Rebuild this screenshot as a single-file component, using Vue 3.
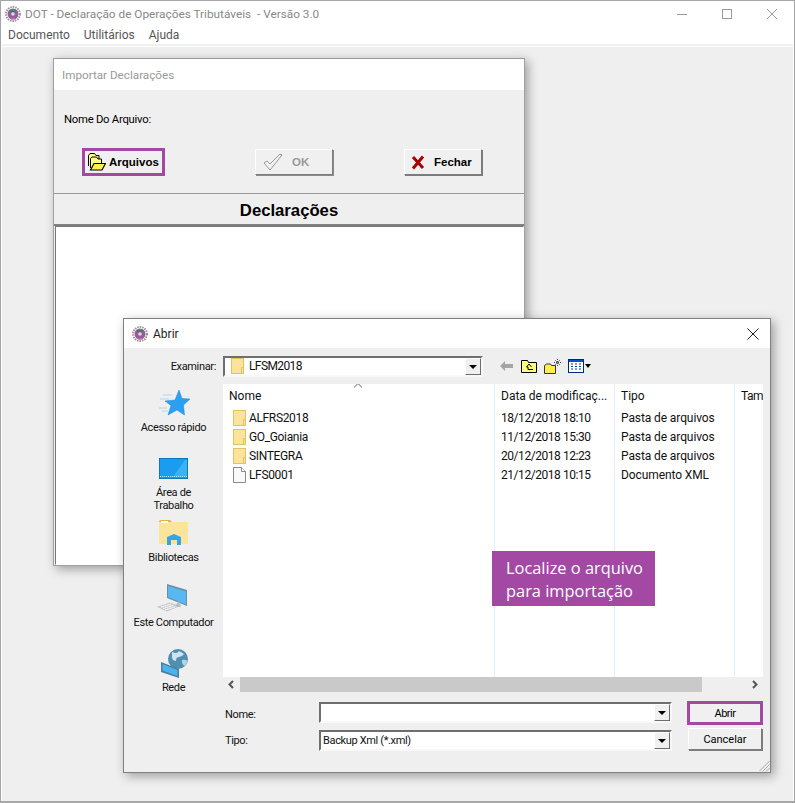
<template>
  <div class="app">
    <div class="titlebar">
      <svg class="logo" viewBox="0 0 16 16"><use href="#logo-mark" /></svg>
      <span class="app-title">DOT - Declaração de Operações Tributáveis&nbsp; - Versão 3.0</span>
      <div class="caption">
        <svg width="45" height="16" viewBox="0 0 45 16"><path d="M18 8.500h10" stroke="#999" fill="none" /></svg>
        <svg width="45" height="16" viewBox="0 0 45 16"><rect x="18.500" y="3.500" width="9" height="9" stroke="#999" fill="none" /></svg>
        <svg width="45" height="16" viewBox="0 0 45 16"><path d="M18 3l10 10M28 3L18 13" stroke="#999" fill="none" /></svg>
      </div>
    </div>
    <div class="menubar">
      <span v-for="m in menus" :key="m">{{ m }}</span>
    </div>

    <div class="mdi">
      <!-- janela de importacao -->
      <section class="win win-import">
        <header class="imp-title">Importar Declarações</header>
        <div class="imp-body">
          <div class="imp-label">Nome Do Arquivo:</div>
          <div class="imp-buttons">
            <button class="bevel btn-arq">
              <svg width="18" height="18" viewBox="0 0 18 18">
                <path d="M.5 13V2.500L2 .5h4.500l1.500 2h3v4" fill="#ffff80" stroke="#000" />
                <path d="M2.500 15V5.500L4 4h4.500L10 6h3.500v4" fill="#ffff80" stroke="#000" />
                <path d="M2.500 17L6 10.500h11.500L14 17z" fill="#fff04a" stroke="#000" stroke-width="1.200" />
              </svg>
              Arquivos
            </button>
            <button class="bevel btn-ok" disabled>
              <svg width="20" height="18" viewBox="0 0 20 18"><path d="M1 10l3-2 3 3L17 1l2 1L7 17z" fill="#f2f2f2" stroke="#999" /></svg>
              <span>OK</span>
            </button>
            <button class="bevel btn-close">
              <svg width="14" height="15" viewBox="0 0 14 15"><path d="M2 2l10 11M12 1.500L2 13.500" stroke="#a80000" stroke-width="3" fill="none" /></svg>
              <span>Fechar</span>
            </button>
          </div>
        </div>
        <div class="imp-heading">Declarações</div>
        <div class="imp-list"></div>
      </section>

      <!-- dialogo abrir -->
      <section class="win win-open">
        <header class="open-title">
          <svg class="logo" viewBox="0 0 16 16"><use href="#logo-mark" /></svg>
          <span>Abrir</span>
          <svg class="open-x" width="12" height="12" viewBox="0 0 12 12"><path d="M.5.500l11 11M11.500.500l-11 11" stroke="#222" fill="none" /></svg>
        </header>
        <div class="open-body">
          <div class="open-tools">
            <label class="tools-label">Examinar:</label>
            <div class="field look-in">
              <svg class="folder" width="13" height="16" viewBox="0 0 13 16"><use href="#folder" /></svg>
              <span>LFSM2018</span>
              <i class="drop"></i>
            </div>
            <div class="tool-icons">
              <svg width="14" height="10" viewBox="0 0 14 10"><path d="M0 5l5-5v3h8v4H5v3z" fill="#a5a5a5" /></svg>
              <svg width="16" height="14" viewBox="0 0 16 14">
                <path d="M.5 13.500V1.500h6l1 2h8v10z" fill="#ffff80" stroke="#000" />
                <path d="M8 5L5.500 8H7v2.500h5M8 5l2.500 3" fill="none" stroke="#000" />
              </svg>
              <svg width="17" height="15" viewBox="0 0 17 15">
                <path d="M.5 14.500V6.500l2-1.500h4l1 1.500h4v8z" fill="#ffec4d" stroke="#333" />
                <path d="M13.500 0v7M10 3.500h7M11 1l5 5M16 1l-5 5" stroke="#444" stroke-dasharray="1 1" fill="none" />
              </svg>
              <span class="view-ico">
                <svg width="16" height="14" viewBox="0 0 16 14">
                  <rect x=".5" y=".5" width="15" height="13" fill="#fff" stroke="#002a70" />
                  <rect x="1" y="1" width="14" height="2" fill="#0a50c8" />
                  <path d="M3 5h2M7 5h2M11 5h2M3 7.500h2M7 7.500h2M11 7.500h2M3 10h2M7 10h2M11 10h2" stroke="#1a3aa0" fill="none" />
                </svg>
                <i></i>
              </span>
            </div>
          </div>

          <div class="open-main">
            <nav class="places">
              <div v-for="p in places" :key="p.label" class="place">
                <div class="place-ico">
                  <svg v-if="p.icon === 'star'" width="32" height="26" viewBox="0 0 32 26">
                    <path d="M5 5h9M2 9h9M1 18h8M4 21h6" stroke="#a8d8f8" fill="none" />
                    <path d="M21 0l3 8.500 8 .5-6.500 6 1 10-7.500-5-9 5 3-9.500-6-4.500 10-1z" fill="#2b9ff0" stroke="#1a86d8" stroke-width=".5" />
                  </svg>
                  <svg v-else-if="p.icon === 'desktop'" width="29" height="21" viewBox="0 0 29 21">
                    <rect x=".5" y=".5" width="28" height="20" fill="#1a9cf0" stroke="#0d76bc" />
                    <path d="M14 19L26 2h2v17z" fill="#3cb2f6" />
                    <path d="M1 18.500h27" stroke="#bfe6ff" stroke-dasharray="1 1" />
                  </svg>
                  <svg v-else-if="p.icon === 'lib'" width="29" height="26" viewBox="0 0 29 26">
                    <path d="M0 2q0-2 2-2h9l2 2h-13z" fill="#e8b33c" />
                    <rect x="0" y="2" width="29" height="22" rx="1" fill="#fce49a" />
                    <rect x="2" y="1" width="7" height="2" fill="#fff" />
                    <path d="M8 25v-8l7-3 7 3v8h-4v-5h-6v5z" fill="#33a6ea" />
                  </svg>
                  <svg v-else-if="p.icon === 'pc'" width="32" height="28" viewBox="0 0 32 28">
                    <path d="M9 0l20 6v16L9 14z" fill="#6d8ea3" />
                    <path d="M10 2l18 5.500v13L10 13z" fill="#58b8f2" />
                    <path d="M21 17l2 6h-7z" fill="#b5c0c8" />
                    <path d="M0 23l12-4 9 3-12 5z" fill="#d0d4d8" stroke="#a8adb2" stroke-width=".5" />
                    <path d="M3 23l10-3M5 24.500l10-3M7 26l10-3" stroke="#fff" stroke-dasharray="1.500 .7" />
                  </svg>
                  <svg v-else width="28" height="29" viewBox="0 0 28 29">
                    <circle cx="18" cy="10" r="10" fill="#4f8fb2" />
                    <path d="M12 3q5 2 6 0t6 2q-2 3-5 3t-3 4q-3 0-4-3z" fill="#cfe3ef" />
                    <path d="M22 11q3-1 5.500 1-1 4-3 5-3-2-2.500-6z" fill="#b7d3e2" />
                    <path d="M1 13l18 7v9L1 23z" fill="#4d7d98" />
                    <path d="M2.500 15l15 6v6L2.500 21.500z" fill="#4ab3ef" />
                  </svg>
                </div>
                <div class="place-label" :class="{ wrap: p.icon === 'desktop' }">{{ p.label }}</div>
              </div>
            </nav>

            <div class="browser">
              <div class="grid">
                <i class="sort-arrow"></i>
                <div class="cols">
                  <div v-for="c in columns" :key="c.label" class="col" :style="{ width: c.width + 'px' }">
                    <div class="col-head">{{ c.label }}</div>
                  </div>
                </div>
                <div class="rows">
                  <div v-for="f in files" :key="f.name" class="row">
                    <div class="cell cell-name">
                      <svg v-if="f.dir" width="13" height="16" viewBox="0 0 13 16"><use href="#folder" /></svg>
                      <svg v-else width="13" height="16" viewBox="0 0 13 16">
                        <path d="M.5.500h8l4 4v11H.5z" fill="#f9f9f9" stroke="#8a8a8a" />
                        <path d="M8.500.500v4h4" fill="#fff" stroke="#8a8a8a" />
                      </svg>
                      <span>{{ f.name }}</span>
                    </div>
                    <div class="cell cell-w cell-date">{{ f.date }}</div>
                    <div class="cell cell-w">{{ f.type }}</div>
                  </div>
                </div>
                <div class="hint">Localize o arquivo<br />para importação</div>
              </div>
              <div class="hscroll">
                <svg width="17" height="15" viewBox="0 0 17 15"><path d="M10 4L6.500 7.500 10 11" stroke="#555" stroke-width="2" fill="none" /></svg>
                <div class="track"><div class="thumb"></div></div>
                <svg width="17" height="15" viewBox="0 0 17 15"><path d="M7 4l3.500 3.500L7 11" stroke="#555" stroke-width="2" fill="none" /></svg>
              </div>
            </div>
          </div>

          <div class="open-foot">
            <div class="foot-labels">
              <label>Nome:</label>
              <label>Tipo:</label>
            </div>
            <div class="foot-fields">
              <div class="field"><i class="drop"></i></div>
              <div class="field"><span class="type-val">Backup Xml (*.xml)</span><i class="drop"></i></div>
            </div>
            <div class="foot-buttons">
              <button class="bevel btn-open">Abrir</button>
              <button class="bevel btn-cancel">Cancelar</button>
            </div>
          </div>
          <svg class="grip" width="12" height="12" viewBox="0 0 12 12"><path d="M11.500 1l-10 10M11.500 4.500l-7 7M11.500 8l-3.500 3.500" stroke="#a8a8a8" fill="none" /></svg>
        </div>
      </section>
    </div>

    <svg width="0" height="0" class="defs">
      <defs>
        <symbol id="folder" viewBox="0 0 13 16">
          <rect x=".5" y=".5" width="12" height="15" fill="#fbe39b" stroke="#e3c267" />
          <path d="M10.500 15V9.500h2" fill="none" stroke="#e3c267" />
        </symbol>
        <symbol id="logo-mark" viewBox="0 0 16 16">
          <circle cx="8" cy="8" r="7" fill="none" stroke="#9b8f9e" stroke-width="2" stroke-dasharray="1.500 1" />
          <circle cx="8" cy="8" r="5.500" fill="#77727c" />
          <path d="M3 6h10v3l-2 3H5L3 9z" fill="#9a5aa0" />
          <path d="M5 4h6v2H5z" fill="#4a7a68" />
          <circle cx="8" cy="8" r="1.800" fill="#dcd8e2" />
          <path d="M6 12h4v1.500H6z" fill="#c86a9a" />
        </symbol>
      </defs>
    </svg>
  </div>
</template>

<script setup>
const menus = ['Documento', 'Utilitários', 'Ajuda'];

const places = [
  { icon: 'star', label: 'Acesso rápido' },
  { icon: 'desktop', label: 'Área de Trabalho' },
  { icon: 'lib', label: 'Bibliotecas' },
  { icon: 'pc', label: 'Este Computador' },
  { icon: 'net', label: 'Rede' },
];

const columns = [
  { label: 'Nome', width: 272 },
  { label: 'Data de modificaç...', width: 120 },
  { label: 'Tipo', width: 120 },
  { label: 'Tam', width: 28 },
];

const files = [
  { name: 'ALFRS2018', date: '18/12/2018 18:10', type: 'Pasta de arquivos', dir: true },
  { name: 'GO_Goiania', date: '11/12/2018 15:30', type: 'Pasta de arquivos', dir: true },
  { name: 'SINTEGRA', date: '20/12/2018 12:23', type: 'Pasta de arquivos', dir: true },
  { name: 'LFS0001', date: '21/12/2018 10:15', type: 'Documento XML', dir: false },
];
</script>

<style>
html,
body {
  margin: 0;
  background: #fff;
}
</style>

<style scoped>
.app {
  width: 795px;
  height: 803px;
  box-sizing: border-box;
  border: 1px solid #a6a6a6;
  border-bottom-width: 2px;
  background: #fff;
  display: flex;
  flex-direction: column;
  overflow: hidden;
  font-family: Roboto, 'Open Sans', sans-serif;
  color: #111;
}
.defs {
  position: absolute;
}
.logo {
  width: 16px;
  height: 16px;
  flex: none;
}
.titlebar {
  height: 25px;
  display: flex;
  align-items: center;
  padding-left: 4px;
  flex: none;
}
.app-title {
  margin-left: 4px;
  font-size: 11.800px;
  color: #888;
  white-space: nowrap;
}
.caption {
  margin-left: auto;
  display: flex;
}
.menubar {
  height: 18px;
  display: flex;
  gap: 14px;
  padding-left: 7px;
  align-items: center;
  font-size: 12px;
  color: #555;
  flex: none;
}
.mdi {
  flex: 1;
  position: relative;
  border-top: 2px solid #f0f0f0;
  margin: 0 1px 0 1px;
  background: #efefef;
  box-shadow: 0 1px 0 #fff inset;
}
.win {
  position: absolute;
  box-sizing: border-box;
  display: flex;
  flex-direction: column;
  background: #efefef;
  box-shadow: 3px 3px 10px rgba(0, 0, 0, 0.35);
}
.win-import {
  left: 51px;
  top: 12px;
  width: 472px;
  height: 508px;
  border: 1px solid #a0a0a0;
  border-top-color: #999;
}
.win-open {
  left: 121px;
  top: 272px;
  width: 648px;
  height: 455px;
  border: 1px solid #7f7f7f;
}

/* botoes estilo antigo */
.bevel {
  box-sizing: border-box;
  padding: 0;
  background: #f0f0f0;
  border: 1px solid;
  border-color: #fff #7c7c7c #7c7c7c #fff;
  box-shadow: 1px 1px 0 #7c7c7c;
  font-family: 'Liberation Sans', sans-serif;
  color: #000;
  display: flex;
  align-items: center;
}

.imp-title {
  height: 31px;
  background: #fff;
  display: flex;
  align-items: center;
  padding-left: 8px;
  font-size: 11.700px;
  color: #999;
  flex: none;
}
.imp-body {
  height: 103px;
  box-sizing: border-box;
  padding: 22px 0 0 10px;
  flex: none;
}
.imp-label {
  font-size: 11.300px;
  line-height: 16px;
  letter-spacing: -0.25px;
  color: #000;
}
.imp-buttons {
  display: flex;
  margin: 20px 0 0 18px;
  align-items: flex-start;
}
.btn-arq {
  width: 83px;
  height: 28px;
  border: 3px solid #a349a4;
  box-shadow: none;
  gap: 3px;
  padding-left: 3px;
  font-size: 11.500px;
  font-weight: 700;
}
.btn-ok,
.btn-close {
  width: 78px;
  height: 26px;
  margin-top: 1px;
  font-size: 11.500px;
  font-weight: 700;
}
.btn-ok {
  margin-left: 90px;
  padding-left: 7px;
  color: #9a9a9a;
  box-shadow: 1px 1px 0 #8c8c8c;
}
.btn-ok span {
  margin-left: 9px;
}
.btn-close {
  margin-left: 71px;
  padding-left: 6px;
}
.btn-close span {
  margin-left: 9px;
}
.imp-heading {
  height: 33px;
  box-sizing: border-box;
  padding-top: 4px;
  border-top: 1px solid #999;
  border-bottom: 2px solid #808080;
  display: flex;
  align-items: center;
  justify-content: center;
  font-family: 'Liberation Sans', sans-serif;
  font-weight: 700;
  font-size: 16.700px;
  color: #000;
  flex: none;
}
.imp-list {
  flex: 1;
  background: #fff;
  margin: 0 0 0 1px;
  border: 1px solid #777;
  border-right-color: #fff;
  border-bottom-color: #fff;
}

.open-title {
  height: 29px;
  background: #fff;
  display: flex;
  align-items: center;
  padding-left: 8px;
  gap: 5px;
  font-size: 12px;
  color: #222;
  flex: none;
}
.open-x {
  margin-left: auto;
  margin-right: 11px;
}
.open-body {
  flex: 1;
  position: relative;
  display: flex;
  flex-direction: column;
  font-size: 11px;
  letter-spacing: -0.35px;
  color: #111;
}
.open-tools {
  height: 36px;
  display: flex;
  align-items: center;
  flex: none;
}
.tools-label {
  width: 92px;
  text-align: right;
  font-size: 11px;
}
.field {
  position: relative;
  box-sizing: border-box;
  height: 21px;
  background: #fff;
  border: 2px solid;
  border-color: #6e6e6e #f8f8f8 #f8f8f8 #6e6e6e;
  display: flex;
  align-items: center;
}
.look-in {
  width: 260px;
  margin-left: 7px;
  padding-left: 6px;
  gap: 5px;
  font-size: 12px;
  letter-spacing: -0.6px;
}
.drop {
  position: absolute;
  right: 0;
  top: 0;
  width: 16px;
  height: 17px;
  box-sizing: border-box;
  background: #f0f0f0;
  border: 1px solid;
  border-color: #fff #6e6e6e #6e6e6e #fff;
}
.drop::after {
  content: '';
  position: absolute;
  left: 3px;
  top: 6px;
  border: 4px solid transparent;
  border-top: 4px solid #000;
  border-bottom: 0;
}
.tool-icons {
  margin-left: 17px;
  display: flex;
  align-items: center;
  gap: 7px;
}
.view-ico {
  display: flex;
  align-items: center;
  gap: 1px;
}
.view-ico i {
  border: 3.500px solid transparent;
  border-top: 4px solid #000;
  border-bottom: 0;
}
.open-main {
  height: 308px;
  display: flex;
  flex: none;
}
.places {
  width: 99px;
  box-sizing: border-box;
  padding-top: 1px;
  flex: none;
  display: flex;
  flex-direction: column;
}
.place {
  height: 65px;
  flex: none;
  text-align: center;
}
.place-ico {
  height: 36px;
  display: flex;
  align-items: center;
  justify-content: center;
}
.place-ico svg {
  display: block;
}
.place-label {
  line-height: 13px;
  font-size: 11px;
  white-space: nowrap;
}
.place-label.wrap {
  white-space: normal;
  width: 60px;
  margin: 0 auto;
}
.browser {
  width: 540px;
  display: flex;
  flex-direction: column;
}
.grid {
  position: relative;
  height: 293px;
  background: #fff;
  overflow: hidden;
  font-size: 12px;
  letter-spacing: 0;
}
.sort-arrow {
  position: absolute;
  left: 132px;
  top: 0;
  width: 5px;
  height: 5px;
  border-left: 1px solid #888;
  border-top: 1px solid #888;
  transform: rotate(45deg);
}
.cols {
  display: flex;
  position: absolute;
  inset: 0;
  white-space: nowrap;
}
.col {
  height: 100%;
  box-sizing: border-box;
  flex: none;
  border-right: 1px solid #e4eefa;
}
.col:last-child {
  border-right: 0;
}
.col-head {
  height: 24px;
  padding-left: 6px;
  line-height: 24px;
  overflow: hidden;
}
.col:last-child .col-head {
  letter-spacing: -0.5px;
}
.rows {
  position: absolute;
  top: 24px;
  left: 0;
  right: 0;
}
.row {
  height: 19px;
  display: flex;
  align-items: center;
}
.cell {
  flex: none;
  padding-left: 6px;
  box-sizing: border-box;
  white-space: nowrap;
  letter-spacing: -0.1px;
}
.cell-w {
  width: 120px;
}
.cell-date {
  letter-spacing: -0.45px;
}
.cell-name {
  width: 272px;
  display: flex;
  align-items: center;
  gap: 3px;
  padding-left: 10px;
  letter-spacing: -0.35px;
}
.hint {
  position: absolute;
  left: 269px;
  top: 167px;
  width: 163px;
  height: 55px;
  box-sizing: border-box;
  background: #a349a4;
  padding: 5px 0 5px 14px;
  font-family: 'Open Sans', sans-serif;
  color: #fff;
  font-size: 16.400px;
  line-height: 23px;
  white-space: nowrap;
}
.hscroll {
  height: 15px;
  display: flex;
  flex: none;
}
.track {
  flex: 1;
}
.thumb {
  width: 462px;
  height: 100%;
  background: #c9c9c9;
}
.open-foot {
  position: relative;
  display: flex;
  padding-top: 10px;
}
.foot-labels {
  width: 195px;
  padding: 6px 0 0 101px;
  box-sizing: border-box;
  display: flex;
  flex-direction: column;
  gap: 13px;
  line-height: 13px;
}
.foot-fields {
  width: 353px;
  display: flex;
  flex-direction: column;
  gap: 7px;
}
.type-val {
  padding-left: 2px;
}
.foot-buttons {
  margin-left: 15px;
  display: flex;
  flex-direction: column;
  gap: 3px;
  margin-top: -1px;
}
.foot-buttons .bevel {
  justify-content: center;
  font-family: Roboto, sans-serif;
  font-size: 11px;
  width: 76px;
}
.btn-open {
  height: 24px;
  border: 3px solid #a349a4;
  box-shadow: none;
  letter-spacing: -0.5px;
}
.foot-buttons .btn-cancel {
  height: 22px;
  margin-left: 1px;
  width: 74px;
}
.grip {
  position: absolute;
  right: 0;
  bottom: 0;
}
</style>
